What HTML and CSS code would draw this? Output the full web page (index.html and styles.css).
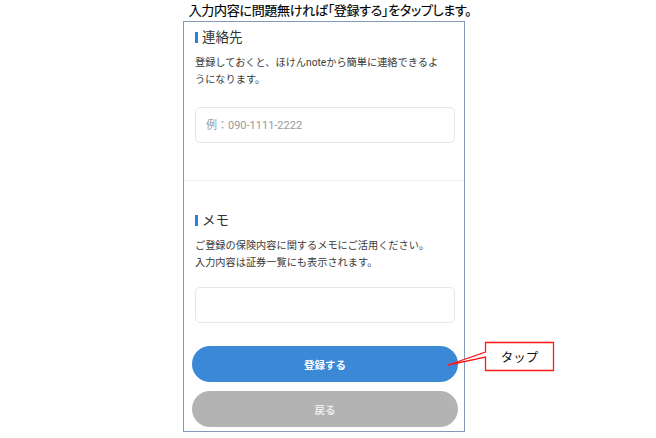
FILE: index.html
```html
<!DOCTYPE html>
<html lang="ja">
<head>
    <meta charset="UTF-8">
    <meta name="viewport" content="width=device-width, initial-scale=1.0">
    <title>連絡先・メモ登録</title>
    <link rel="stylesheet" href="styles.css">
</head>
<body>

    <div id="page">
        <p id="caption">入力内容に問題無ければ「登録する」をタップします。</p>

        <div id="phoneFrame">
            <div class="section">
                <h2 class="sectionTitle">連絡先</h2>
                <p class="sectionText">登録しておくと、ほけんnoteから簡単に連絡できるようになります。</p>
                <input type="tel" class="field" id="phoneInput" placeholder="例：090-1111-2222">
            </div>

            <div class="section" id="memoSection">
                <h2 class="sectionTitle">メモ</h2>
                <p class="sectionText">ご登録の保険内容に関するメモにご活用ください。<br>入力内容は証券一覧にも表示されます。</p>
                <input type="text" class="field" id="memoInput">

                <button class="roundButton" id="registerButton">登録する</button>
                <button class="roundButton" id="backButton">戻る</button>
            </div>
        </div>

        <!-- 吹き出し -->
        <div id="callout">
            <svg width="112" height="34" viewBox="0 0 112 34">
                <path d="M39.5 2.5 H107.5 V30.5 H39.5 V17 L2 25 L39.5 12 Z" fill="#fff" stroke="#ff1a1a" stroke-width="1.3"/>
            </svg>
            <span id="calloutText">タップ</span>
        </div>
    </div>

</body>
</html>
```

FILE: styles.css
```css
body {
    margin: 0;
    padding: 0;
    background-color: #fff;
    font-family: Roboto, "Noto Sans CJK JP", sans-serif;
}

#page {
    position: relative;
    width: 656px;
    height: 438px;
}

#caption {
    margin: 0;
    height: 21px;
    line-height: 20px;
    text-align: center;
    font-family: "Noto Sans CJK JP", sans-serif;
    font-size: 13px;
    font-feature-settings: "palt";
    letter-spacing: -0.3px;
    color: #000;
    padding-left: 4px;
    -webkit-text-stroke: 0.15px #000;
}

#phoneFrame {
    margin-left: 183px;
    width: 280px;
    border: 1px solid #8299b9;
    background-color: #fff;
}

.section {
    padding: 6px 9px 37px 11px;
    border-bottom: 1px solid #eeeeee;
}

#memoSection {
    padding-top: 30px;
    padding-bottom: 4px;
    border-bottom: none;
}

.sectionTitle {
    margin: 0;
    height: 18px;
    line-height: 18px;
    font-size: 13.5px;
    font-weight: normal;
    color: #333;
    display: flex;
    align-items: center;
}

.sectionTitle::before {
    content: "";
    display: block;
    flex: none;
    width: 3px;
    height: 11px;
    margin-right: 4px;
    background-color: #2a7fdc;
}

.sectionText {
    margin: 8px 12px 0 0;
    font-size: 10.2px;
    line-height: 17px;
    color: #3a3a3a;
}

.field {
    display: block;
    width: 100%;
    height: 36px;
    margin-top: 19px;
    padding: 0 10px;
    box-sizing: border-box;
    border: 1px solid #e6e6e6;
    border-radius: 5px;
    font-family: Roboto, "Noto Sans CJK JP", sans-serif;
    font-size: 11px;
    background-color: #fff;
}

.field::placeholder {
    color: #9a9a9a;
}

#memoInput {
    margin-top: 16px;
}

.roundButton {
    display: block;
    width: calc(100% + 6px);
    height: 36px;
    margin: 0 -3px;
    border: none;
    border-radius: 18px;
    font-family: "Noto Sans CJK JP", sans-serif;
    font-size: 10.5px;
    font-weight: bold;
    cursor: pointer;
}

#registerButton {
    margin-top: 23px;
    background-color: #3a88d6;
    color: #fff;
}

#backButton {
    margin-top: 9px;
    background-color: #b3b3b3;
    color: #ececec;
}

#callout {
    position: absolute;
    left: 446px;
    top: 340px;
    width: 112px;
    height: 34px;
}

#callout svg {
    display: block;
}

#calloutText {
    position: absolute;
    left: 40px;
    top: 3px;
    width: 67px;
    height: 27px;
    line-height: 27px;
    text-align: center;
    font-family: "Noto Sans CJK JP", sans-serif;
    font-size: 12.5px;
    color: #111;
}
```
